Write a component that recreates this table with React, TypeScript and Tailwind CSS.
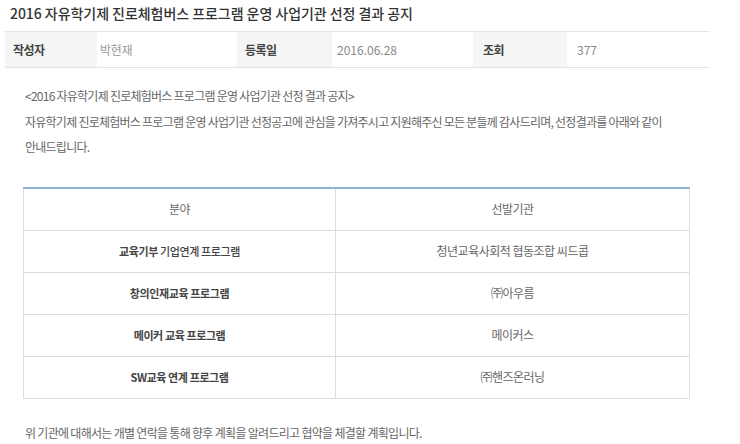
const font = { fontFamily: '"Noto Sans CJK KR", "Noto Sans", sans-serif' };

const rows = [
  { field: '교육기부', rest: ' 기업연계 프로그램', org: '청년교육사회적 협동조합 씨드콥' },
  { field: '창의인재교육 프로그램', rest: '', org: '㈜아우름' },
  { field: '메이커 교육 프로그램', rest: '', org: '메이커스' },
  { field: 'SW교육 연계 프로그램', rest: '', org: '㈜핸즈온러닝' },
];

export default function App() {
  return (
    <div className="w-[740px] h-[444px] bg-white overflow-hidden" style={font}>
      {/* Title */}
      <h1 className="pl-[10px] pt-[2px] h-[31px] text-[14px] leading-[22px] font-medium text-[#333] tracking-[-0.05px]">
        2016 자유학기제 진로체험버스 프로그램 운영 사업기관 선정 결과 공지
      </h1>

      {/* Info */}
      <div className="ml-[5px] w-[704px] h-[37px] flex border-t border-b border-[#e3e3e3] text-[12px]">
        <div className="w-[92px] bg-[#f5f5f5] flex items-center pl-[8px] font-bold text-[#444] tracking-[-0.6px]">작성자</div>
        <div className="w-[140px] flex items-center pl-[3px] text-[#999] tracking-[-0.3px]">박현재</div>
        <div className="w-[95px] bg-[#f5f5f5] flex items-center pl-[8px] font-bold text-[#444] tracking-[-0.6px]">등록일</div>
        <div className="w-[141px] flex items-center pl-[5px] text-[#888]">2016.06.28</div>
        <div className="w-[94px] bg-[#f5f5f5] flex items-center pl-[10px] font-bold text-[#444] tracking-[-0.6px]">조회</div>
        <div className="flex-1 flex items-center pl-[10px] text-[#888]">377</div>
      </div>

      {/* Body */}
      <div className="pl-[25px] pt-[15px] text-[12px] leading-[25px] text-[#666] tracking-[-0.75px]">
        <p>&lt;2016 자유학기제 진로체험버스 프로그램 운영 사업기관 선정 결과 공지&gt;</p>
        <p className="pt-[1px]">
          자유학기제 진로체험버스 프로그램 운영 사업기관 선정공고에 관심을 가져주시고 지원해주신 모든 분들께 감사드리며, 선정결과를 아래와 같이
          <br />
          안내드립니다.
        </p>
      </div>

      {/* Result table */}
      <table className="ml-[23px] mt-[28px] w-[667px] border-collapse tracking-[-0.5px]">
        <thead>
          <tr className="h-[42px] border-t-2 border-t-[#8db6d8] text-[12px]">
            <th className="w-[312px] border-x border-b border-[#dddddd] font-normal text-[#666]">분야</th>
            <th className="border-x border-b border-[#dddddd] font-normal text-[#666]">선발기관</th>
          </tr>
        </thead>
        <tbody>
          {rows.map((r) => (
            <tr key={r.field} className="h-[42px]">
              <td className="border border-[#dddddd] text-center text-[11px] font-bold text-[#444] tracking-[-0.4px]">
                {r.field}
                {r.rest && <span className="font-medium">{r.rest}</span>}
              </td>
              <td className="border border-[#dddddd] text-center text-[12px] text-[#666]">{r.org}</td>
            </tr>
          ))}
        </tbody>
      </table>

      {/* Footer */}
      <p className="pl-[25px] pt-[21px] text-[12px] leading-[25px] text-[#666] tracking-[-0.7px]">
        위 기관에 대해서는 개별 연락을 통해 향후 계획을 알려드리고 협약을 체결할 계획입니다.
      </p>
    </div>
  );
}
